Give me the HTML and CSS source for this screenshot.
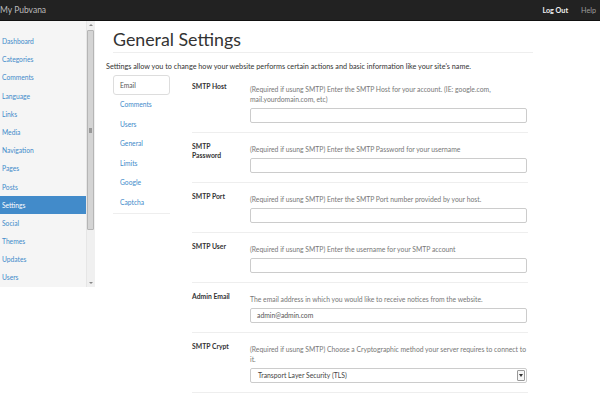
FILE: index.html
```html
<!DOCTYPE html>
<html>
<head>
<meta charset="utf-8">
<link rel="stylesheet" href="styles.css">
</head>
<body>
<header class="topbar">
  <span class="brand">My Pubvana</span>
  <nav class="topnav"><a class="logout">Log Out</a><a class="help">Help</a></nav>
</header>
<div class="layout">
  <aside class="sidebar">
    <ul class="menu">
      <li>Dashboard</li>
      <li>Categories</li>
      <li>Comments</li>
      <li>Language</li>
      <li>Links</li>
      <li>Media</li>
      <li>Navigation</li>
      <li>Pages</li>
      <li>Posts</li>
      <li class="active">Settings</li>
      <li>Social</li>
      <li>Themes</li>
      <li>Updates</li>
      <li>Users</li>
    </ul>
    <div class="scrollbar">
      <div class="sb-btn up"></div>
      <div class="sb-track"><div class="sb-thumb"><span class="grip"></span></div></div>
      <div class="sb-btn down"></div>
    </div>
  </aside>
  <main class="main">
    <h1 class="title">General Settings</h1>
    <p class="intro">Settings allow you to change how your website performs certain actions and basic information like your site's name.</p>
    <div class="settings">
      <ul class="tabs">
        <li class="current">Email</li>
        <li>Comments</li>
        <li>Users</li>
        <li>General</li>
        <li>Limits</li>
        <li>Google</li>
        <li>Captcha</li>
      </ul>
      <div class="form">
        <div class="row">
          <label class="lbl">SMTP Host</label>
          <div class="field">
            <p class="hint">(Required if usung SMTP) Enter the SMTP Host for your account. (IE: google.com, mail.yourdomain.com, etc)</p>
            <div class="input"></div>
          </div>
        </div>
        <div class="row">
          <label class="lbl">SMTP Password</label>
          <div class="field">
            <p class="hint">(Required if usung SMTP) Enter the SMTP Password for your username</p>
            <div class="input"></div>
          </div>
        </div>
        <div class="row">
          <label class="lbl">SMTP Port</label>
          <div class="field">
            <p class="hint">(Required if usung SMTP) Enter the SMTP Port number provided by your host.</p>
            <div class="input"></div>
          </div>
        </div>
        <div class="row">
          <label class="lbl">SMTP User</label>
          <div class="field">
            <p class="hint">(Required if usung SMTP) Enter the username for your SMTP account</p>
            <div class="input"></div>
          </div>
        </div>
        <div class="row">
          <label class="lbl">Admin Email</label>
          <div class="field">
            <p class="hint">The email address in which you would like to receive notices from the website.</p>
            <div class="input">admin@admin.com</div>
          </div>
        </div>
        <div class="row">
          <label class="lbl">SMTP Crypt</label>
          <div class="field">
            <p class="hint">(Required if usung SMTP) Choose a Cryptographic method your server requires to connect to it.</p>
            <div class="input select"><span>Transport Layer Security (TLS)</span><span class="dd"><svg width="4" height="3" viewBox="0 0 4 3"><path d="M0 0H4L2 3Z" fill="#333"/></svg></span></div>
          </div>
        </div>
      </div>
    </div>
  </main>
</div>
</body>
</html>
```
FILE: styles.css
```css
* { box-sizing: border-box; }
html, body { margin: 0; padding: 0; }
body {
  width: 600px;
  height: 400px;
  overflow: hidden;
  background: #fff;
  font-family: Lato, "Open Sans", sans-serif;
  color: #333;
}
ul { list-style: none; margin: 0; padding: 0; }
p { margin: 0; }

.topbar {
  height: 21px;
  background: #222;
  border-bottom: 1px solid #111;
  display: flex;
  align-items: center;
  justify-content: space-between;
}
.brand { color: #bbb; font-size: 8.5px; }
.topnav { display: flex; gap: 13px; padding-right: 4px; font-size: 7.2px; }
.logout { color: #f0f0f0; font-weight: 700; }
.help { color: #9d9d9d; }

.layout { display: flex; align-items: flex-start; }

.sidebar {
  width: 95px;
  height: 266px;
  display: flex;
  background: #f5f5f5;
}
.menu {
  width: 86px;
  padding-top: 11px;
  font-size: 6.7px;
}
.menu li {
  height: 18.2px;
  line-height: 18.2px;
  padding-left: 2px;
  color: #428bca;
}
.menu li.active { background: #428bca; color: #fff; }

.scrollbar {
  width: 9px;
  height: 266px;
  display: flex;
  flex-direction: column;
  background: #f0f0f0;
  border-left: 1px solid #e6e6e6;
}
.sb-btn { height: 8px; position: relative; }
.sb-btn::after {
  content: "";
  position: absolute;
  left: 2px;
  border-left: 2px solid transparent;
  border-right: 2px solid transparent;
}
.sb-btn.up::after { top: 3px; border-bottom: 2px solid #888; }
.sb-btn.down::after { top: 3px; border-top: 2px solid #888; }
.sb-track { flex: 1; padding: 1px 0; }
.sb-thumb {
  height: 200px;
  margin: 0 1px 0 0;
  background: #d4d4d4;
  border: 1px solid #b5b5b5;
  border-radius: 1px;
  display: flex;
  align-items: center;
  justify-content: center;
}
.grip { width: 3px; height: 5px; background: #999; }

.main { padding-left: 11px; width: 440px; }
.title {
  margin: 7px 0 0 7px;
  padding-bottom: 2px;
  width: 420px;
  font-size: 17.8px;
  font-weight: 400;
  line-height: 22px;
  color: #333;
  border-bottom: 1px solid #eee;
}
.intro {
  margin-top: 9px;
  font-size: 7.25px;
  line-height: 10px;
  color: #333;
}

.settings { display: flex; margin-left: 7px; margin-top: 1px; }
.tabs {
  width: 57px;
  margin-top: 2px;
  font-size: 6.7px;
  border-bottom: 1px solid #eee;
  align-self: flex-start;
}
.tabs li {
  height: 19.6px;
  line-height: 19.6px;
  padding-left: 7px;
  color: #428bca;
}
.tabs li.current {
  color: #555;
  border: 1px solid #ddd;
  border-radius: 3px;
  line-height: 18px;
  height: 20px;
  padding-left: 6px;
}

.form { margin-left: 22px; width: 336px; }
.row {
  display: flex;
  padding: 9px 0 9px;
  border-bottom: 1px solid #eee;
}
.lbl {
  width: 48px;
  margin-right: 10px;
  font-size: 6.8px;
  font-weight: 700;
  line-height: 9px;
  color: #333;
}
.field { width: 278px; }
.hint {
  margin-top: 2px;
  font-size: 6.8px;
  line-height: 10px;
  color: #777;
  margin-bottom: 4px;
}
.input {
  height: 15px;
  width: 277px;
  border: 1px solid #ccc;
  border-radius: 2px;
  background: #fff;
  font-size: 6.8px;
  line-height: 13px;
  padding-left: 6px;
  color: #555;
}
.select {
  display: flex;
  justify-content: space-between;
  padding-left: 7px;
  color: #444;
}
.dd {
  width: 8px;
  margin: 1px;
  border: 1px solid #999;
  border-radius: 1px;
  background: #f6f6f6;
  display: flex;
  align-items: center;
  justify-content: center;
}
```
